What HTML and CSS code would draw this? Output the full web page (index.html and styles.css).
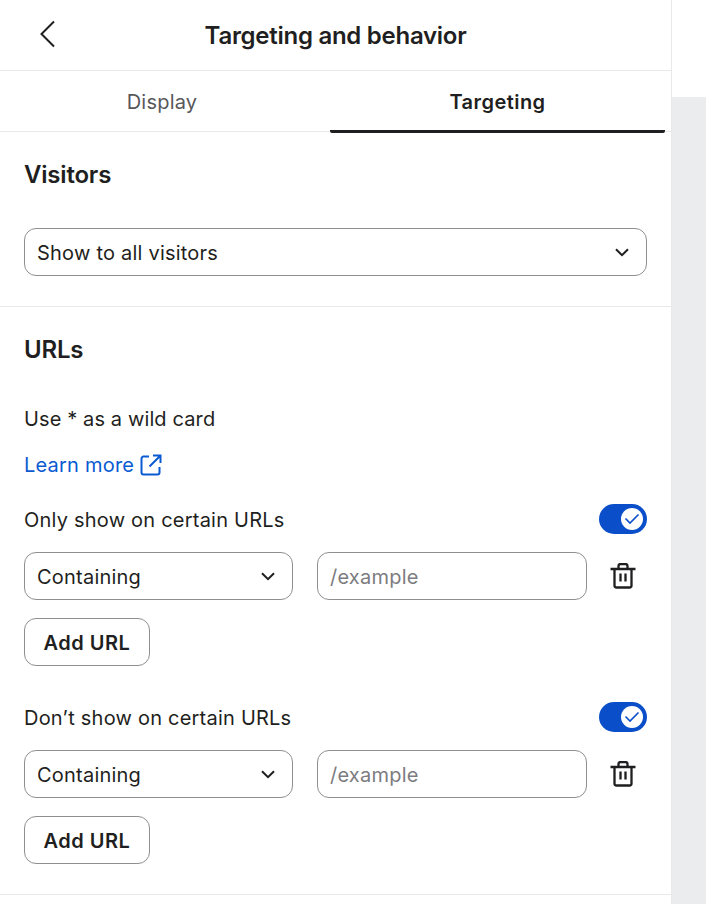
FILE: index.html
```html
<!DOCTYPE html>
<html lang="en">
<head>
<meta charset="utf-8">
<title>Targeting and behavior</title>
<link rel="stylesheet" href="styles.css">
</head>
<body>
<main class="panel">
  <header class="header">
    <button class="back" aria-label="Back">
      <svg width="16" height="28" viewBox="0 0 16 28"><path d="M14 1.500 1.500 14 14 26.500" fill="none" stroke="#1f1f21" stroke-width="2"/></svg>
    </button>
    <h1 class="title">Targeting and behavior</h1>
  </header>
  <nav class="tabs">
    <div class="tab">Display</div>
    <div class="tab tab-active">Targeting</div>
  </nav>
  <section class="section section-visitors">
    <h2 class="section-title">Visitors</h2>
    <div class="select select-wide">
      <span>Show to all visitors</span>
      <svg class="chev" width="14" height="9" viewBox="0 0 14 9"><path d="M1 1.200 7 7.200 13 1.200" fill="none" stroke="#1f1f21" stroke-width="2"/></svg>
    </div>
  </section>
  <section class="section section-urls">
    <h2 class="section-title">URLs</h2>
    <p class="hint">Use * as a wild card</p>
    <a class="learn" href="#">Learn more
      <svg width="22" height="22" viewBox="0 0 22 22" fill="none" stroke="#0a5ad2" stroke-width="2"><path d="M9 2.500H3.500a2 2 0 0 0-2 2v14a2 2 0 0 0 2 2h14a2 2 0 0 0 2-2V13"/><path d="M13 1.500h7.500V9M20.500 1.500 9.500 12.500"/></svg>
    </a>
    <div class="rule">
      <div class="rule-head">
        <span>Only show on certain URLs</span>
        <span class="toggle"><span class="knob"><svg width="16" height="12" viewBox="0 0 16 12"><path d="M1.500 5.500 6 10 14.500 1.500" fill="none" stroke="#0a4fc9" stroke-width="1.600"/></svg></span></span>
      </div>
      <div class="rule-row">
        <div class="select select-half"><span>Containing</span><svg class="chev" width="14" height="9" viewBox="0 0 14 9"><path d="M1 1.200 7 7.200 13 1.200" fill="none" stroke="#1f1f21" stroke-width="2"/></svg></div>
        <div class="field">/example</div>
        <svg class="trash" width="26" height="26" viewBox="0 0 26 26" fill="none" stroke="#1f1f21" stroke-width="2.300"><path d="M0.500 6h25M8.500 5.500V3a2 2 0 0 1 2-2h5a2 2 0 0 1 2 2v2.500M4.500 6.500V22.500a2 2 0 0 0 2 2h13a2 2 0 0 0 2-2V6.500M10.500 10.500v8M15.500 10.500v8"/></svg>
      </div>
      <button class="add">Add URL</button>
    </div>
    <div class="rule rule-second">
      <div class="rule-head">
        <span>Don’t show on certain URLs</span>
        <span class="toggle"><span class="knob"><svg width="16" height="12" viewBox="0 0 16 12"><path d="M1.500 5.500 6 10 14.500 1.500" fill="none" stroke="#0a4fc9" stroke-width="1.600"/></svg></span></span>
      </div>
      <div class="rule-row">
        <div class="select select-half"><span>Containing</span><svg class="chev" width="14" height="9" viewBox="0 0 14 9"><path d="M1 1.200 7 7.200 13 1.200" fill="none" stroke="#1f1f21" stroke-width="2"/></svg></div>
        <div class="field">/example</div>
        <svg class="trash" width="26" height="26" viewBox="0 0 26 26" fill="none" stroke="#1f1f21" stroke-width="2.300"><path d="M0.500 6h25M8.500 5.500V3a2 2 0 0 1 2-2h5a2 2 0 0 1 2 2v2.500M4.500 6.500V22.500a2 2 0 0 0 2 2h13a2 2 0 0 0 2-2V6.500M10.500 10.500v8M15.500 10.500v8"/></svg>
      </div>
      <button class="add">Add URL</button>
    </div>
  </section>
</main>
<div class="side">
  <div class="side-top"></div>
  <div class="side-fill"></div>
</div>
</body>
</html>
```
FILE: styles.css
```css
* { box-sizing: border-box; }
html, body { margin: 0; height: 904px; overflow: hidden; background: #fff; }
body {
  display: flex;
  font-family: Inter, "Liberation Sans", sans-serif;
  font-size: 20px;
  letter-spacing: 0.22px;
  color: #1f1f21;
}
.panel { width: 672px; flex: none; height: 904px; border-right: 1px solid #e9e9ea; overflow: hidden; }
.side { flex: 1; display: flex; flex-direction: column; }
.side-top { height: 97px; }
.side-fill { flex: 1; background: #ebecee; }

.header { height: 71px; border-bottom: 1px solid #e9e9ea; display: flex; align-items: center; justify-content: center; position: relative; }
.back { position: absolute; left: 40px; top: 20px; width: 16px; height: 28px; padding: 0; border: 0; background: none; display: flex; }
.title { margin: 0 0 -1px; font-size: 24px; line-height: 30px; font-weight: 600; letter-spacing: -0.27px; }

.tabs { height: 61px; border-bottom: 1px solid #e9e9ea; display: flex; padding-right: 6px; }
.tab { display: flex; align-items: center; justify-content: center; color: #57575a; }
.tab:first-child { flex: 0 0 324px; padding-top: 1px; }
.tab-active { flex: 1; margin-left: 6px; color: #1f1f21; font-weight: 600; letter-spacing: 0.45px; border-bottom: 3px solid #1f1f21; height: 62px; border-radius: 0 0 2px 2px; padding-top: 2px; }

.section { padding: 0 24px; }
.section-visitors { height: 175px; padding-top: 27px; border-bottom: 1px solid #e9e9ea; }
.section-urls { height: 588px; padding-top: 27px; border-bottom: 1px solid #e9e9ea; }
.section-title { margin: 0; font-size: 24px; line-height: 32px; font-weight: 600; letter-spacing: -0.2px; }
.section-visitors .select { margin-top: 37px; }

.select { height: 48px; border: 1px solid #8f8f92; border-radius: 12px; display: flex; align-items: center; justify-content: space-between; padding: 2px 17px 0 12px; }
.select .chev { margin-top: -2px; }
.select-wide { width: 623px; }
.select-half { width: 269px; flex: none; }
.field { width: 270px; flex: none; height: 48px; border: 1px solid #8f8f92; border-radius: 12px; display: flex; align-items: center; padding: 2px 0 0 12px; color: #7c7c80; }

.hint { margin: 0; padding-top: 39px; line-height: 28px; letter-spacing: 0.12px; }
.learn { margin-top: 18px; display: flex; align-items: center; gap: 6px; line-height: 28px; color: #0a5ad2; text-decoration: none; }

.rule { margin-top: 26px; }
.rule-second { margin-top: 37px; }
.rule-head { display: flex; align-items: center; justify-content: space-between; height: 30px; }
.toggle { width: 48px; height: 30px; margin-top: -2px; border-radius: 15px; background: #0a4fc9; display: flex; align-items: center; justify-content: flex-end; padding-right: 4px; }
.knob { width: 22px; height: 22px; border-radius: 50%; background: #fff; display: flex; align-items: center; justify-content: center; }
.rule-row { display: flex; align-items: center; margin-top: 17px; }
.rule-row .field { margin-left: 24px; }
.trash { margin-left: 23px; }
.add { display: block; margin-top: 18px; width: 126px; height: 48px; border: 1px solid #8f8f92; border-radius: 12px; background: #fff; font: 600 20px Inter, "Liberation Sans", sans-serif; letter-spacing: 0.5px; color: #1f1f21; padding: 2px 0 0; }
```
